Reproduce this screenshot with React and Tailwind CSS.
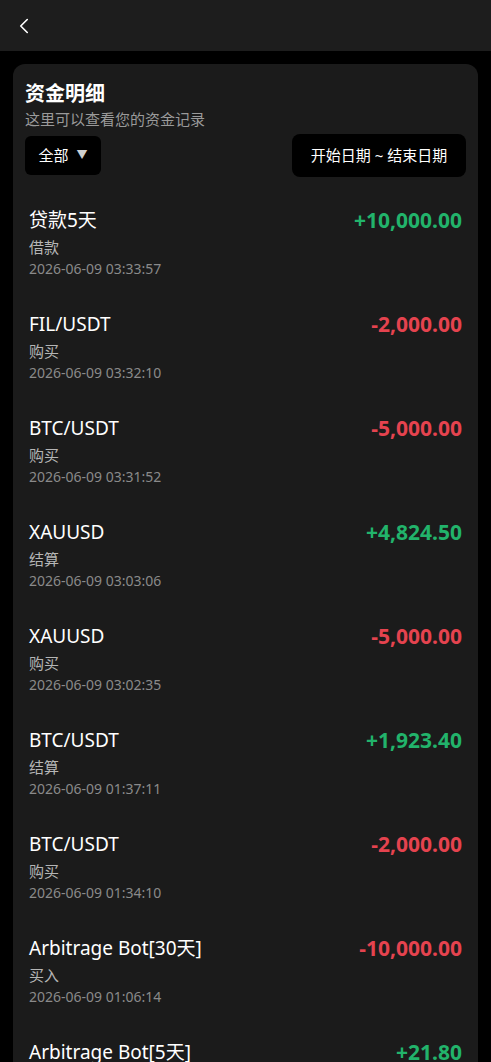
import { ChevronLeft } from "lucide-react";

const records = [
  { title: "贷款5天", type: "借款", time: "2026-06-09 03:33:57", amount: "+10,000.00" },
  { title: "FIL/USDT", type: "购买", time: "2026-06-09 03:32:10", amount: "-2,000.00" },
  { title: "BTC/USDT", type: "购买", time: "2026-06-09 03:31:52", amount: "-5,000.00" },
  { title: "XAUUSD", type: "结算", time: "2026-06-09 03:03:06", amount: "+4,824.50" },
  { title: "XAUUSD", type: "购买", time: "2026-06-09 03:02:35", amount: "-5,000.00" },
  { title: "BTC/USDT", type: "结算", time: "2026-06-09 01:37:11", amount: "+1,923.40" },
  { title: "BTC/USDT", type: "购买", time: "2026-06-09 01:34:10", amount: "-2,000.00" },
  { title: "Arbitrage Bot[30天]", type: "买入", time: "2026-06-09 01:06:14", amount: "-10,000.00" },
  { title: "Arbitrage Bot[5天]", type: "结算", time: "2026-06-09 01:00:00", amount: "+21.80" },
];

function RecordItem({ item }) {
  const positive = item.amount.startsWith("+");
  return (
    <div className="flex justify-between px-4 pt-[14px] pb-[17px]">
      <div className="flex flex-col">
        <span className="text-[19px] leading-[26px] text-white">{item.title}</span>
        <span className="text-[15px] leading-[22px] mt-[3px] text-[#b5b5b5]">{item.type}</span>
        <span className="text-[14px] leading-[22px] text-[#8a8a8a]">{item.time}</span>
      </div>
      <span
        className={
          positive
            ? "text-[21px] leading-[26px] font-bold text-[#22b36b]"
            : "text-[21px] leading-[26px] font-bold text-[#e5434f]"
        }
      >
        {item.amount}
      </span>
    </div>
  );
}

export default function App() {
  return (
    <div
      className="h-[1062px] overflow-hidden bg-black"
      style={{ fontFamily: '"Noto Sans", "Noto Sans CJK SC", sans-serif' }}
    >
      <header className="h-[51px] bg-[#1d1d1d] flex items-center px-[11px]">
        <ChevronLeft size={26} strokeWidth={1.5} className="text-white" />
      </header>
      <div className="px-[13px] pt-[13px]">
        <div className="rounded-xl bg-[#1b1b1b] pb-4">
          <div className="px-3 pt-[16px]">
            <h1 className="text-[20px] leading-[28px] font-bold text-white">资金明细</h1>
            <p className="text-[15px] leading-[22px] text-[#9a9a9a]">这里可以查看您的资金记录</p>
            <div className="flex justify-between items-start mt-[4px]">
              <button className="bg-black text-white text-[15px] rounded-md h-[39px] w-[76px] mt-[2px] flex items-center justify-center gap-2">
                全部 <span className="text-[11px] text-[#cfcfcf]">▼</span>
              </button>
              <button className="bg-black text-white text-[15px] rounded-lg h-[43px] w-[174px] flex items-center justify-center">
                开始日期 ~ 结束日期
              </button>
            </div>
          </div>
          <div className="mt-[16px]">
            {records.map((r, i) => (
              <RecordItem key={i} item={r} />
            ))}
          </div>
        </div>
      </div>
    </div>
  );
}
